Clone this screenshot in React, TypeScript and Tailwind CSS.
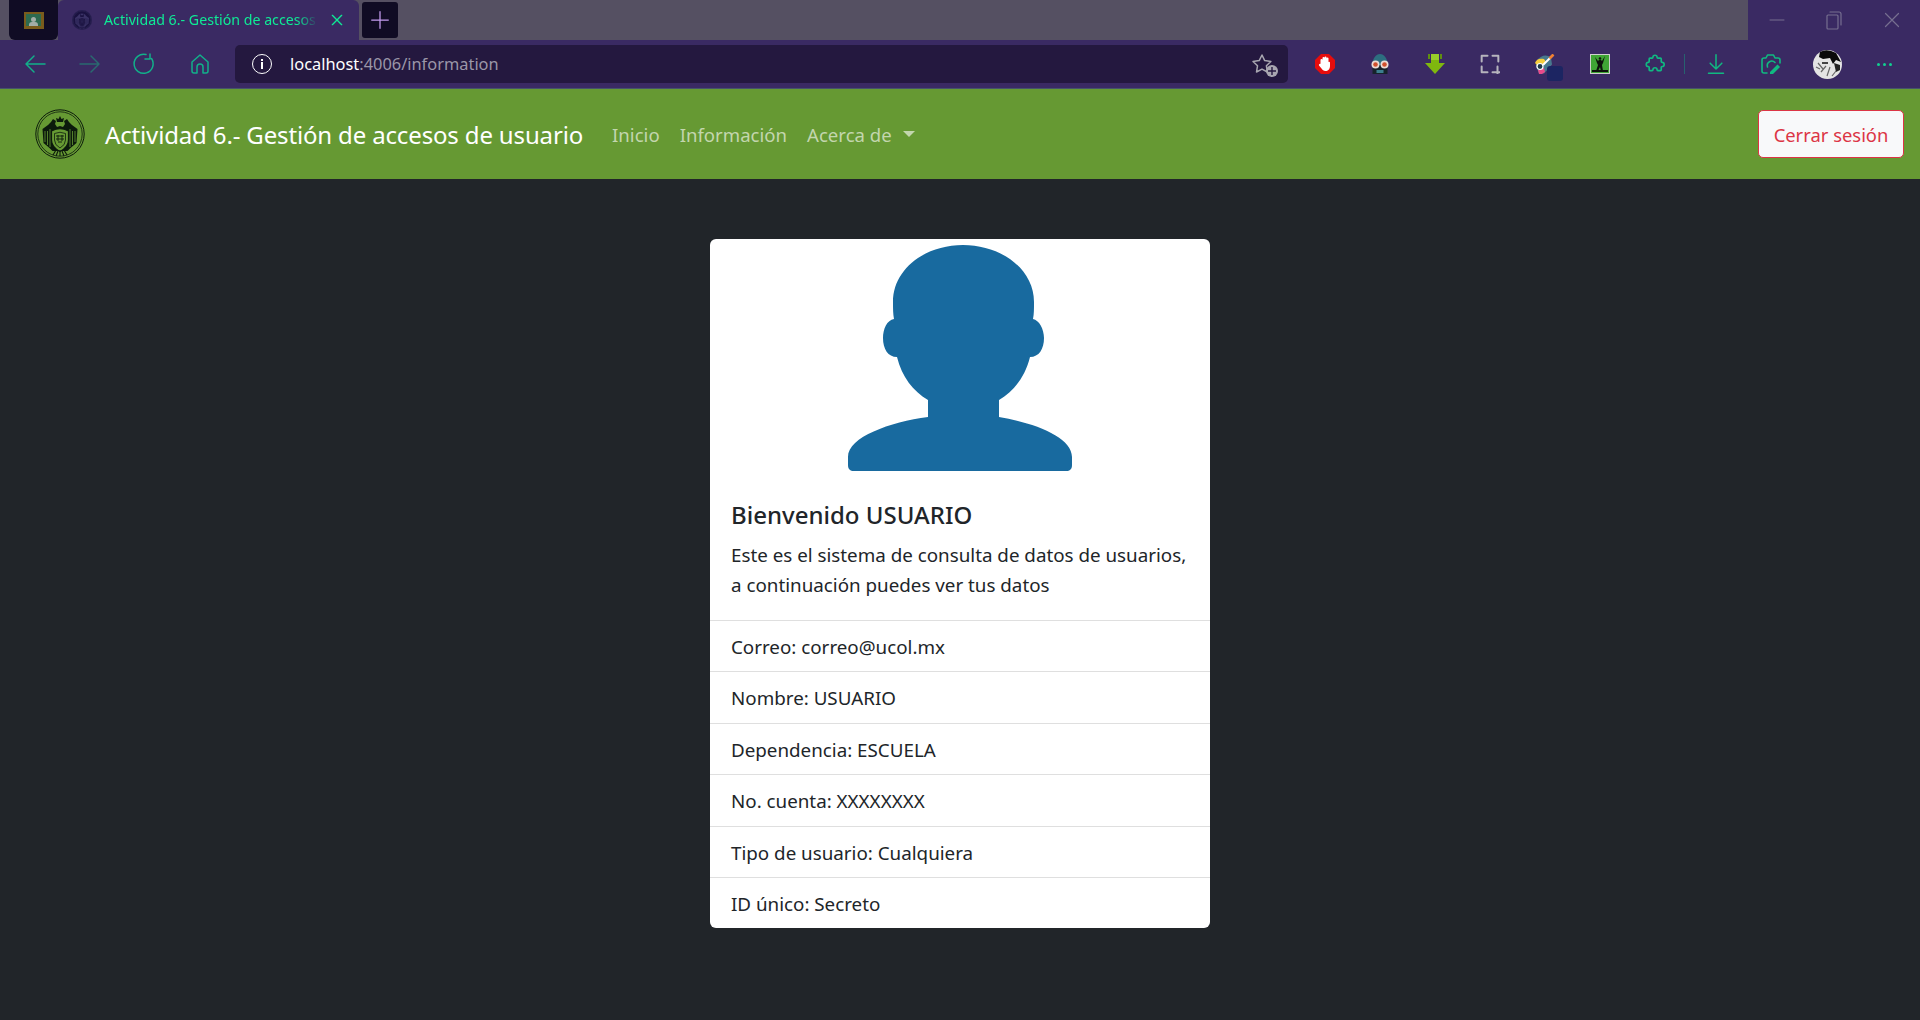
const font = { fontFamily: '"Noto Sans", sans-serif' };

function Seal({ size, color, bg }: { size: number; color: string; bg: string }) {
  return (
    <svg width={size} height={size} viewBox="0 0 50 50" fill="none" className="shrink-0">
      <circle cx="25" cy="25" r="24.200" stroke={color} strokeWidth="1" />
      <circle cx="25" cy="25" r="22.200" stroke={color} strokeWidth="0.800" />
      <path d="M7.500 20L13 16l3-3 2-3 3 2-1 3 2 3 3-1 3 1 2-3-1-3 3-2 2 3 3 3 5.500 4-1 14-6 5-3 3h-15l-3-3-6-5z" fill={color} />
      <path d="M10 22v11M12.500 22v14M15 20v18M40 22v11M37.500 22v14M35 20v18" stroke={bg} strokeWidth="0.800" />
      <path d="M25 7l1.500 3 2.500-1-1 4h-6l-1-4 2.500 1z" fill={color} />
      <path d="M16.500 22Q25 17.500 33.500 22V31Q33.500 38 25 42.500Q16.500 38 16.500 31Z" fill={bg} stroke={color} strokeWidth="1.200" />
      <path d="M19.500 24.500Q25 22 30.500 24.500V31Q30.500 36 25 39Q19.500 36 19.500 31Z" stroke={color} strokeWidth="0.800" />
      <path d="M21 27h8M21 30h8M23 26v6M27 26v6M23 33h4" stroke={color} strokeWidth="0.900" />
      <path d="M25 41v6M21 41l-3 5M29 41l3 5M23 42l-2 5M27 42l2 5" stroke={color} strokeWidth="1.100" />
    </svg>
  );
}

function Avatar() {
  return (
    <svg className="block mx-auto" width="240" height="240" viewBox="0 0 240 240">
      <path
        fill="#186a9f"
        d="M123 6C85 6 53 30 53 63C53 70 53 75 54 80C47 81 43 90 43 99C43 110 48 118 57 118C62 138 73 152 88 161L88 178C50 183 8 198 8 218L8 226C8 230 10 232 14 232L226 232C230 232 232 230 232 226L232 218C232 198 195 184 159 178L159 161C174 152 185 138 190 118C199 118 204 110 204 99C204 90 199 81 193 80C194 75 194 70 194 63C194 30 161 6 123 6Z"
      />
    </svg>
  );
}

function Btn({ children, w = 'w-[55px]' }: { children?: React.ReactNode; w?: string }) {
  return <div className={`${w} h-full flex items-center justify-center shrink-0`}>{children}</div>;
}

function Line({ d, c = '#12b886', s = 24, sw = 1.5 }: { d: string; c?: string; s?: number; sw?: number }) {
  return (
    <svg width={s} height={s} viewBox="0 0 24 24" fill="none" stroke={c} strokeWidth={sw} strokeLinecap="round" strokeLinejoin="round">
      <path d={d} />
    </svg>
  );
}

function Toolbar() {
  return (
    <div className="h-[48px] bg-[#3a2a63] flex items-center pl-[7px] border-b border-[#45546a] box-content">
      <Btn><Line d="M22 12H3M11 4l-8 8 8 8" c="#12b08a" /></Btn>
      <Btn><Line d="M2 12h19M13 4l8 8-8 8" c="#2a6a70" /></Btn>
      <Btn><Line d="M17 2v5h-5M18.500 6.500A9.500 9.500 0 1 1 13 2.600" c="#12b08a" /></Btn>
      <Btn><Line d="M4 19a2 2 0 0 0 2 2h3v-6a3 3 0 0 1 6 0v6h3a2 2 0 0 0 2-2V10l-8-7-8 7z" c="#12b08a" /></Btn>
      <div className="ml-[8px] w-[1053px] h-[38px] bg-[#24183f] rounded-[5px] flex items-center shrink-0">
        <div className="ml-[17px] w-[20px] h-[20px] rounded-full border-[1.5px] border-white flex flex-col items-center justify-center gap-[1px]">
          <div className="w-[2px] h-[2px] bg-white" />
          <div className="w-[2px] h-[7px] bg-white" />
        </div>
        <span className="ml-[18px] text-[16.400px] text-white" style={font}>localhost<span className="text-[#9b96a8]">:4006/information</span></span>
        <div className="ml-auto mr-[13px] relative">
          <Line d="M11 3l2.700 5.600 6.200.9-4.500 4.300 1 6.200-5.400-2.900-5.500 2.900 1-6.200L2 9.500l6.200-.9z" c="#a8a6b0" />
          <div className="absolute right-[-3px] bottom-[-1px] w-[12px] h-[12px] rounded-full bg-[#a8a6b0] flex items-center justify-center">
            <svg width="8" height="8" viewBox="0 0 8 8" stroke="#24183f" strokeWidth="1.400"><path d="M4 0v8M0 4h8" /></svg>
          </div>
        </div>
      </div>
      <div className="ml-[9px] flex h-full items-center">
        <Btn>
          <svg width="20" height="20" viewBox="0 0 20 20">
            <path d="M6 0h8l6 6v8l-6 6H6l-6-6V6z" fill="#e60d0d" />
            <path d="M5.500 10V6a1 1 0 0 1 2 0V4a1 1 0 0 1 2 0V3.500a1 1 0 0 1 2 0V4.500a1 1 0 0 1 2 0V8a1 1 0 0 1 1.500.5V12c0 3-2 5-4.500 5-2 0-3-1-4-2.500L4 11.500c-.5-1 .8-2 1.500-1.500z" fill="#fff" />
          </svg>
        </Btn>
        <Btn>
          <svg width="20" height="20" viewBox="0 0 20 20">
            <path d="M2.500 11C2.500 4 6 0 10 0s7.500 4 7.500 11z" fill="#2d6f80" />
            <path d="M2.500 11h15v9h-15z" fill="#17232b" />
            <rect x="6.500" y="16" width="7" height="3" fill="#3c7f8f" />
            <circle cx="5.500" cy="10.500" r="4" fill="#ecdcd4" />
            <circle cx="14.500" cy="10.500" r="4" fill="#ecdcd4" />
            <circle cx="5.500" cy="10.500" r="2.300" fill="#d0502c" />
            <circle cx="14.500" cy="10.500" r="2.300" fill="#d0502c" />
          </svg>
        </Btn>
        <Btn>
          <svg width="20" height="20" viewBox="0 0 20 20">
            <path d="M0 9h6V0h8v9h6l-10 11z" fill="#7fb80e" />
            <path d="M3 0h2v5H3zM15 0h2v5h-2z" fill="#5f8f10" />
            <path d="M6 0h8v6H6z" fill="#98d02a" />
          </svg>
        </Btn>
        <Btn>
          <Line s={20} c="#b6b4bd" sw={2.400} d="M9 2H2v7M15 2h7v7M2 15v7h7M21 15v4M15 22h9M21 19v5" />
        </Btn>
        <Btn>
          <div className="relative w-[20px] h-[20px]">
            <svg width="20" height="20" viewBox="0 0 20 20" className="block">
              <path d="M1 12a9.500 9.500 0 0 1 15-8.500l1 7-8 9H4z" fill="#47788e" />
              <path d="M0 9c1-4 5-5 9-4l2 3-7 5z" fill="#f7cd3c" />
              <path d="M3 16l6-2 1 4-3 2H4z" fill="#e84a8b" />
              <circle cx="5" cy="12.500" r="3" fill="#1f3a4a" stroke="#fff" strokeWidth="1.200" />
              <path d="M8 11L18 1" stroke="#fff" strokeWidth="2" />
              <path d="M14.500 4.500L18.500 .5" stroke="#f08030" strokeWidth="2.500" />
            </svg>
            <div className="absolute left-[12px] top-[12px] w-[16px] h-[15px] rounded-[3px] bg-[#1c2562]" />
          </div>
        </Btn>
        <Btn>
          <svg width="20" height="20" viewBox="0 0 20 20">
            <rect x="0.500" y="0.500" width="19" height="19" fill="#3fa535" stroke="#cfcfcf" />
            <path d="M2 16h16v2H2z" fill="#0d120c" />
            <path d="M5 3l3 4 1-1h2l1 1 3-5-2 7-1 2 1 6h-2l-1-4-2 4H6l2-6-1-2z" fill="#0d120c" />
            <circle cx="10" cy="4.500" r="1.300" fill="#0d120c" />
          </svg>
        </Btn>
        <Btn>
          <Line s={20} c="#10b981" d="M9.500 4a2.500 2.500 0 0 1 5 0c0 .5.5 1 1 1h3a1 1 0 0 1 1 1v3c0 .5.5 1 1 1a2.500 2.500 0 0 1 0 5c-.5 0-1 .5-1 1v3a1 1 0 0 1-1 1h-3c-.5 0-1-.5-1-1a2.500 2.500 0 0 0-5 0c0 .5-.5 1-1 1H6a1 1 0 0 1-1-1v-3c0-.5-.5-1-1-1a2.500 2.500 0 0 1 0-5c.5 0 1-.5 1-1V6a1 1 0 0 1 1-1h2.500c.5 0 1-.5 1-1z" sw={2} />
        </Btn>
        <div className="w-[1px] h-[20px] bg-[#27626f] mx-[2px]" />
        <Btn w="w-[57px]"><Line s={20} c="#10b981" d="M12 1v17M5 11l7 7 7-7M3 23h18" sw={1.800} /></Btn>
        <Btn w="w-[54px]">
          <svg width="20" height="20" viewBox="0 0 20 20" fill="none" stroke="#10b981" strokeWidth="1.600" strokeLinecap="round" strokeLinejoin="round">
            <path d="M6 19H3a2 2 0 0 1-2-2V6a2 2 0 0 1 2-2h2l1.500-3h6L14 4h3a2 2 0 0 1 2 2v3" />
            <path d="M6.500 13a4.500 4.500 0 0 1 7.500-4.500" />
            <path d="M9 18l7.500-7.500 2.500 2.500L11.500 20.500H9z" fill="#10b981" stroke="none" />
          </svg>
        </Btn>
        <Btn w="w-[58px]">
          <svg width="29" height="29" viewBox="0 0 29 29">
            <circle cx="14.500" cy="14.500" r="14.500" fill="#e4e4e4" />
            <path d="M7 2Q14 -2 23 3L28 12L23 10L20 14L17 8L10 9L6 7z" fill="#0a0a0a" />
            <path d="M21 13l6 2v5l-4 2z" fill="#222" />
            <path d="M5 13l5 6M8 22l5-6M14 26l3-9M19 26l4-5M3 17l4 2" stroke="#666" strokeWidth="1.200" />
            <path d="M9 12h6v2H9z" fill="#444" />
          </svg>
        </Btn>
        <Btn w="w-[57px]">
          <div className="flex gap-[3px]">
            <div className="w-[3px] h-[3px] rounded-full bg-[#10d090]" />
            <div className="w-[3px] h-[3px] rounded-full bg-[#10d090]" />
            <div className="w-[3px] h-[3px] rounded-full bg-[#10d090]" />
          </div>
        </Btn>
      </div>
    </div>
  );
}

function TabStrip() {
  return (
    <div className="h-[40px] bg-[#555062] flex">
      <div className="w-[49px] ml-[9px] h-full bg-[#100c24] rounded-b-[6px] flex items-center justify-center shrink-0">
        <div className="w-[20px] h-[17px] bg-[#7a5c1c] flex items-center justify-center">
          <div className="w-[15px] h-[12px] bg-[#2d6a4f] flex flex-col items-center justify-end">
            <div className="w-[5px] h-[5px] bg-[#a3aea8] rounded-full" />
            <div className="w-[9px] h-[4px] bg-[#a3aea8] rounded-t-[3px]" />
          </div>
        </div>
      </div>
      <div className="w-[301px] bg-[#3a2a63] rounded-t-[6px] flex items-center pl-[14px] shrink-0">
        <div className="w-[20px] h-[20px] rounded-full bg-[#1a1240] flex items-center justify-center shrink-0">
          <Seal size={20} color="#3a3266" bg="#1a1240" />
        </div>
        <span className="ml-[12px] w-[214px] whitespace-nowrap text-[14.200px] text-[#0fea96] [mask-image:linear-gradient(to_right,#000_90%,transparent_100%)]" style={font}>Actividad 6.- Gestión de accesos</span>
        <div className="ml-[11px]"><Line s={16} c="#0fea96" d="M5 5l14 14M19 5L5 19" sw={2} /></div>
      </div>
      <div className="ml-[3px] mt-[2px] w-[36px] h-[36px] bg-[#100c24] rounded-[3px] flex items-center justify-center shrink-0">
        <Line s={20} c="#c49cf0" d="M12 2v20M2 12h20" sw={1.500} />
      </div>
      <div className="ml-auto w-[172px] bg-[#3a2a63] flex items-center shrink-0">
        <div className="w-[57px] flex justify-center"><Line c="#766f90" sw={1} d="M5 12h14" /></div>
        <div className="w-[58px] flex justify-center"><Line c="#766f90" sw={1.200} d="M6 7h9a1 1 0 0 1 1 1v12a1 1 0 0 1-1 1H6a1 1 0 0 1-1-1V8a1 1 0 0 1 1-1zM8 4h9a2 2 0 0 1 2 2v11" /></div>
        <div className="w-[57px] flex justify-center"><Line c="#766f90" sw={1.200} d="M5.500 5.500l13 13M18.500 5.500l-13 13" /></div>
      </div>
    </div>
  );
}

function Navbar() {
  return (
    <nav className="h-[90px] bg-[#669933] flex items-center pl-[35px] pr-[16px]" style={font}>
      <Seal size={50} color="#0c1a0c" bg="#669933" />
      <span className="ml-[20px] mt-[1px] text-[24px] tracking-[-0.15px] text-white whitespace-nowrap">Actividad 6.- Gestión de accesos de usuario</span>
      <div className="ml-[29px] mt-[1px] flex items-center gap-[20px] text-[18.600px] text-[#c3d6ae]">
        <span>Inicio</span>
        <span>Información</span>
        <span className="flex items-center gap-[11px]">
          Acerca de
          <span className="w-0 h-0 border-x-[6px] border-x-transparent border-t-[6px] border-t-[#c3d6ae]" />
        </span>
      </div>
      <button className="ml-auto w-[146px] h-[48px] bg-[#f8f9fa] border border-[#dc3545] rounded-[5px] pt-[1px] text-[18.400px] text-[#dc3545]">Cerrar sesión</button>
    </nav>
  );
}

const rows = ['Correo: correo@ucol.mx', 'Nombre: USUARIO', 'Dependencia: ESCUELA', 'No. cuenta: XXXXXXXX', 'Tipo de usuario: Cualquiera', 'ID único: Secreto'];

function Card() {
  return (
    <div className="w-[500px] bg-white rounded-[6px] overflow-hidden text-[#212529] mt-[60px]" style={font}>
      <Avatar />
      <div className="px-[21px] pt-[21px] pb-[20px]">
        <h5 className="text-[24px] leading-[29px] font-medium mb-[11px]">Bienvenido USUARIO</h5>
        <p className="text-[18.800px] leading-[30px]">Este es el sistema de consulta de datos de usuarios, a continuación puedes ver tus datos</p>
      </div>
      {rows.map((r) => (
        <div key={r} className="border-t border-[#dfdfdf] px-[21px] pt-[11px] pb-[9px] text-[18.800px] leading-[30.400px]">{r}</div>
      ))}
    </div>
  );
}

export default function App() {
  return (
    <div className="w-[1920px] h-[1020px] bg-[#212529] flex flex-col overflow-hidden">
      <TabStrip />
      <Toolbar />
      <Navbar />
      <div className="flex justify-center"><Card /></div>
    </div>
  );
}
